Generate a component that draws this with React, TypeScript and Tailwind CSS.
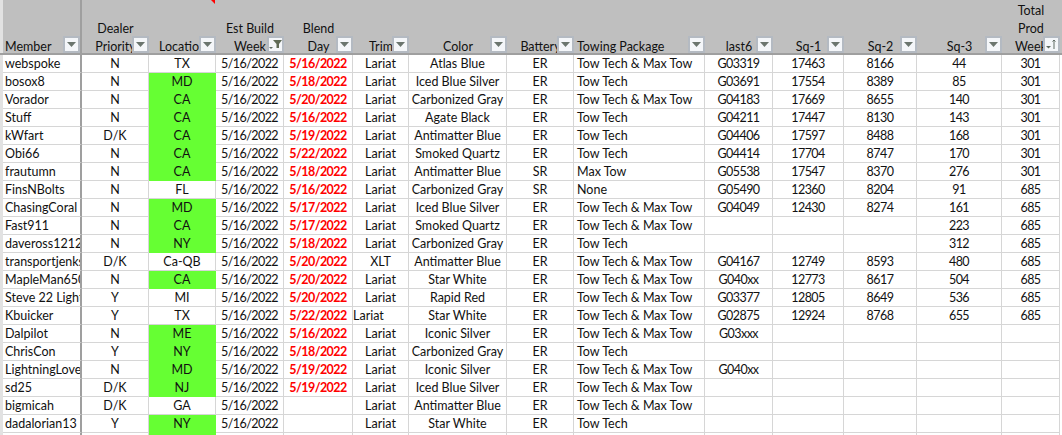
const gridCols =
  "grid grid-cols-[3px_79px_67px_67px_68px_69px_56px_98px_67px_131px_68px_71px_73px_85px_58px_2px]";

type HeadCell = { lines: string[]; sort?: "filter" | "sorted" };

const heads: HeadCell[] = [
  { lines: ["Member"] },
  { lines: ["Dealer", "Priority"] },
  { lines: ["Location"] },
  { lines: ["Est Build", "Week"], sort: "filter" },
  { lines: ["Blend", "Day"] },
  { lines: ["Trim"] },
  { lines: ["Color"] },
  { lines: ["Battery"] },
  { lines: ["Towing Package"] },
  { lines: ["last6"] },
  { lines: ["Sq-1"] },
  { lines: ["Sq-2"] },
  { lines: ["Sq-3"] },
  { lines: ["Total", "Prod", "Week"], sort: "sorted" },
];

const rows: string[][] = [
  ["webspoke", "N", "TX", "5/16/2022", "5/16/2022", "Lariat", "Atlas Blue", "ER", "Tow Tech & Max Tow", "G03319", "17463", "8166", "44", "301"],
  ["bosox8", "N", "MD", "5/16/2022", "5/18/2022", "Lariat", "Iced Blue Silver", "ER", "Tow Tech", "G03691", "17554", "8389", "85", "301"],
  ["Vorador", "N", "CA", "5/16/2022", "5/20/2022", "Lariat", "Carbonized Gray", "ER", "Tow Tech & Max Tow", "G04183", "17669", "8655", "140", "301"],
  ["Stuff", "N", "CA", "5/16/2022", "5/16/2022", "Lariat", "Agate Black", "ER", "Tow Tech", "G04211", "17447", "8130", "143", "301"],
  ["kWfart", "D/K", "CA", "5/16/2022", "5/19/2022", "Lariat", "Antimatter Blue", "ER", "Tow Tech", "G04406", "17597", "8488", "168", "301"],
  ["Obi66", "N", "CA", "5/16/2022", "5/22/2022", "Lariat", "Smoked Quartz", "ER", "Tow Tech", "G04414", "17704", "8747", "170", "301"],
  ["frautumn", "N", "CA", "5/16/2022", "5/18/2022", "Lariat", "Antimatter Blue", "SR", "Max Tow", "G05538", "17547", "8370", "276", "301"],
  ["FinsNBolts", "N", "FL", "5/16/2022", "5/16/2022", "Lariat", "Carbonized Gray", "SR", "None", "G05490", "12360", "8204", "91", "685"],
  ["ChasingCoral", "N", "MD", "5/16/2022", "5/17/2022", "Lariat", "Iced Blue Silver", "ER", "Tow Tech & Max Tow", "G04049", "12430", "8274", "161", "685"],
  ["Fast911", "N", "CA", "5/16/2022", "5/17/2022", "Lariat", "Smoked Quartz", "ER", "Tow Tech & Max Tow", "", "", "", "223", "685"],
  ["daveross1212", "N", "NY", "5/16/2022", "5/18/2022", "Lariat", "Carbonized Gray", "ER", "Tow Tech", "", "", "", "312", "685"],
  ["transportjenks", "D/K", "Ca-QB", "5/16/2022", "5/20/2022", "XLT", "Antimatter Blue", "ER", "Tow Tech & Max Tow", "G04167", "12749", "8593", "480", "685"],
  ["MapleMan650", "N", "CA", "5/16/2022", "5/20/2022", "Lariat", "Star White", "ER", "Tow Tech & Max Tow", "G040xx", "12773", "8617", "504", "685"],
  ["Steve 22 Lightning", "Y", "MI", "5/16/2022", "5/20/2022", "Lariat", "Rapid Red", "ER", "Tow Tech & Max Tow", "G03377", "12805", "8649", "536", "685"],
  ["Kbuicker", "Y", "TX", "5/16/2022", "5/22/2022", "Lariat", "Star White", "ER", "Tow Tech & Max Tow", "G02875", "12924", "8768", "655", "685"],
  ["Dalpilot", "N", "ME", "5/16/2022", "5/16/2022", "Lariat", "Iconic Silver", "ER", "Tow Tech & Max Tow", "G03xxx", "", "", "", ""],
  ["ChrisCon", "Y", "NY", "5/16/2022", "5/18/2022", "Lariat", "Carbonized Gray", "ER", "Tow Tech", "", "", "", "", ""],
  ["LightningLover", "N", "MD", "5/16/2022", "5/19/2022", "Lariat", "Iconic Silver", "ER", "Tow Tech & Max Tow", "G040xx", "", "", "", ""],
  ["sd25", "D/K", "NJ", "5/16/2022", "5/19/2022", "Lariat", "Iced Blue Silver", "ER", "Tow Tech & Max Tow", "", "", "", "", ""],
  ["bigmicah", "D/K", "GA", "5/16/2022", "", "Lariat", "Antimatter Blue", "ER", "Tow Tech & Max Tow", "", "", "", "", ""],
  ["dadalorian13", "Y", "NY", "5/16/2022", "", "Lariat", "Star White", "ER", "Tow Tech", "", "", "", "", ""],
  // only the top of this row is on screen
  ["", "", "NY", "", "", "", "", "", "", "", "", "", "", ""],
];

const greenStates = new Set(["MD", "CA", "NY", "ME", "NJ"]);
const numericCols = new Set([3, 4, 9, 10, 11, 12, 13]);

function FilterButton({ sort }: { sort?: "filter" | "sorted" }) {
  return (
    <span className="absolute right-0 bottom-0 flex h-[17px] w-[17px] items-center justify-center border-2 border-[#b4bac2] bg-[#f4f6f9]">
      {sort === "filter" && (
        <svg width="13" height="13" viewBox="0 0 13 13">
          <path d="M4 2h9L10 6v4H7.500V6z" fill="#5f6a55" />
          <path d="M0 9h4L2 11z" fill="#5f6a63" />
        </svg>
      )}
      {sort === "sorted" && (
        <svg width="13" height="13" viewBox="0 0 13 13">
          <path d="M1 8h5L3.500 10.500z" fill="#5f6a63" />
          <path d="M9 11V2M7.500 3.500L9 2l1.500 1.500" fill="none" stroke="#5f6a63" />
        </svg>
      )}
      {!sort && (
        <svg width="9" height="5" viewBox="0 0 9 5">
          <path d="M0 0h9L4.500 5z" fill="#6b756e" />
        </svg>
      )}
    </span>
  );
}

export default function App() {
  return (
    <div className="relative h-[435px] w-[1062px] overflow-hidden bg-white font-['Lato','Liberation_Sans',sans-serif] text-[12.5px] leading-[18px] text-[#111111]">
      {/* header */}
      <div className={`${gridCols} h-[55px] border-b-2 border-[#9f9f9f] bg-[#bfbfbf]`}>
        <div className="bg-[#e2e2e2]" />
        {heads.map((h, i) => (
          <div
            key={i}
            className={`relative flex flex-col justify-end overflow-hidden ${
              i === 0 ? "border-r-2 border-[#9f9f9f] pl-[2px]" : ""
            } ${i === 8 ? "pl-[3px]" : ""} ${i !== 0 && i !== 8 ? "items-center text-center" : ""}`}
          >
            <div className="-mb-[3px]">
              {h.lines.map((l) => (
                <span key={l} className="block whitespace-nowrap">
                  {l}
                </span>
              ))}
            </div>
            <FilterButton sort={h.sort} />
          </div>
        ))}
        <div />
      </div>
      <span className="absolute top-0 left-[211px] h-0 w-0 border-t-[4px] border-l-[4px] border-t-[#ff0000] border-l-transparent" />

      {/* body */}
      {rows.map((row, r) => (
        <div key={r} className={`${gridCols} h-[18px]`}>
          <div className="bg-[#e2e2e2]" />
          {row.map((cell, c) => {
            const green = c === 2 && greenStates.has(cell);
            const left = c === 0 || c === 8 || (c === 5 && r === 14);
            return (
              <div
                key={c}
                className={`overflow-hidden whitespace-nowrap border-b pt-px leading-[16px] ${
                  c === 0 ? "border-r-2 pl-[2px]" : "border-r"
                } ${green ? "border-[#66ff33] bg-[#66ff33]" : c === 0 ? "border-b-[#d6d6d6] border-r-[#9f9f9f]" : "border-[#d6d6d6]"} ${
                  left ? "text-left" : "text-center"
                } ${c === 8 ? "pl-[3px]" : ""} ${numericCols.has(c) ? "tracking-[-0.55px]" : ""} ${
                  c === 4 ? "font-bold text-[#ff0000]" : ""
                }`}
              >
                {cell}
              </div>
            );
          })}
          <div />
        </div>
      ))}
    </div>
  );
}
